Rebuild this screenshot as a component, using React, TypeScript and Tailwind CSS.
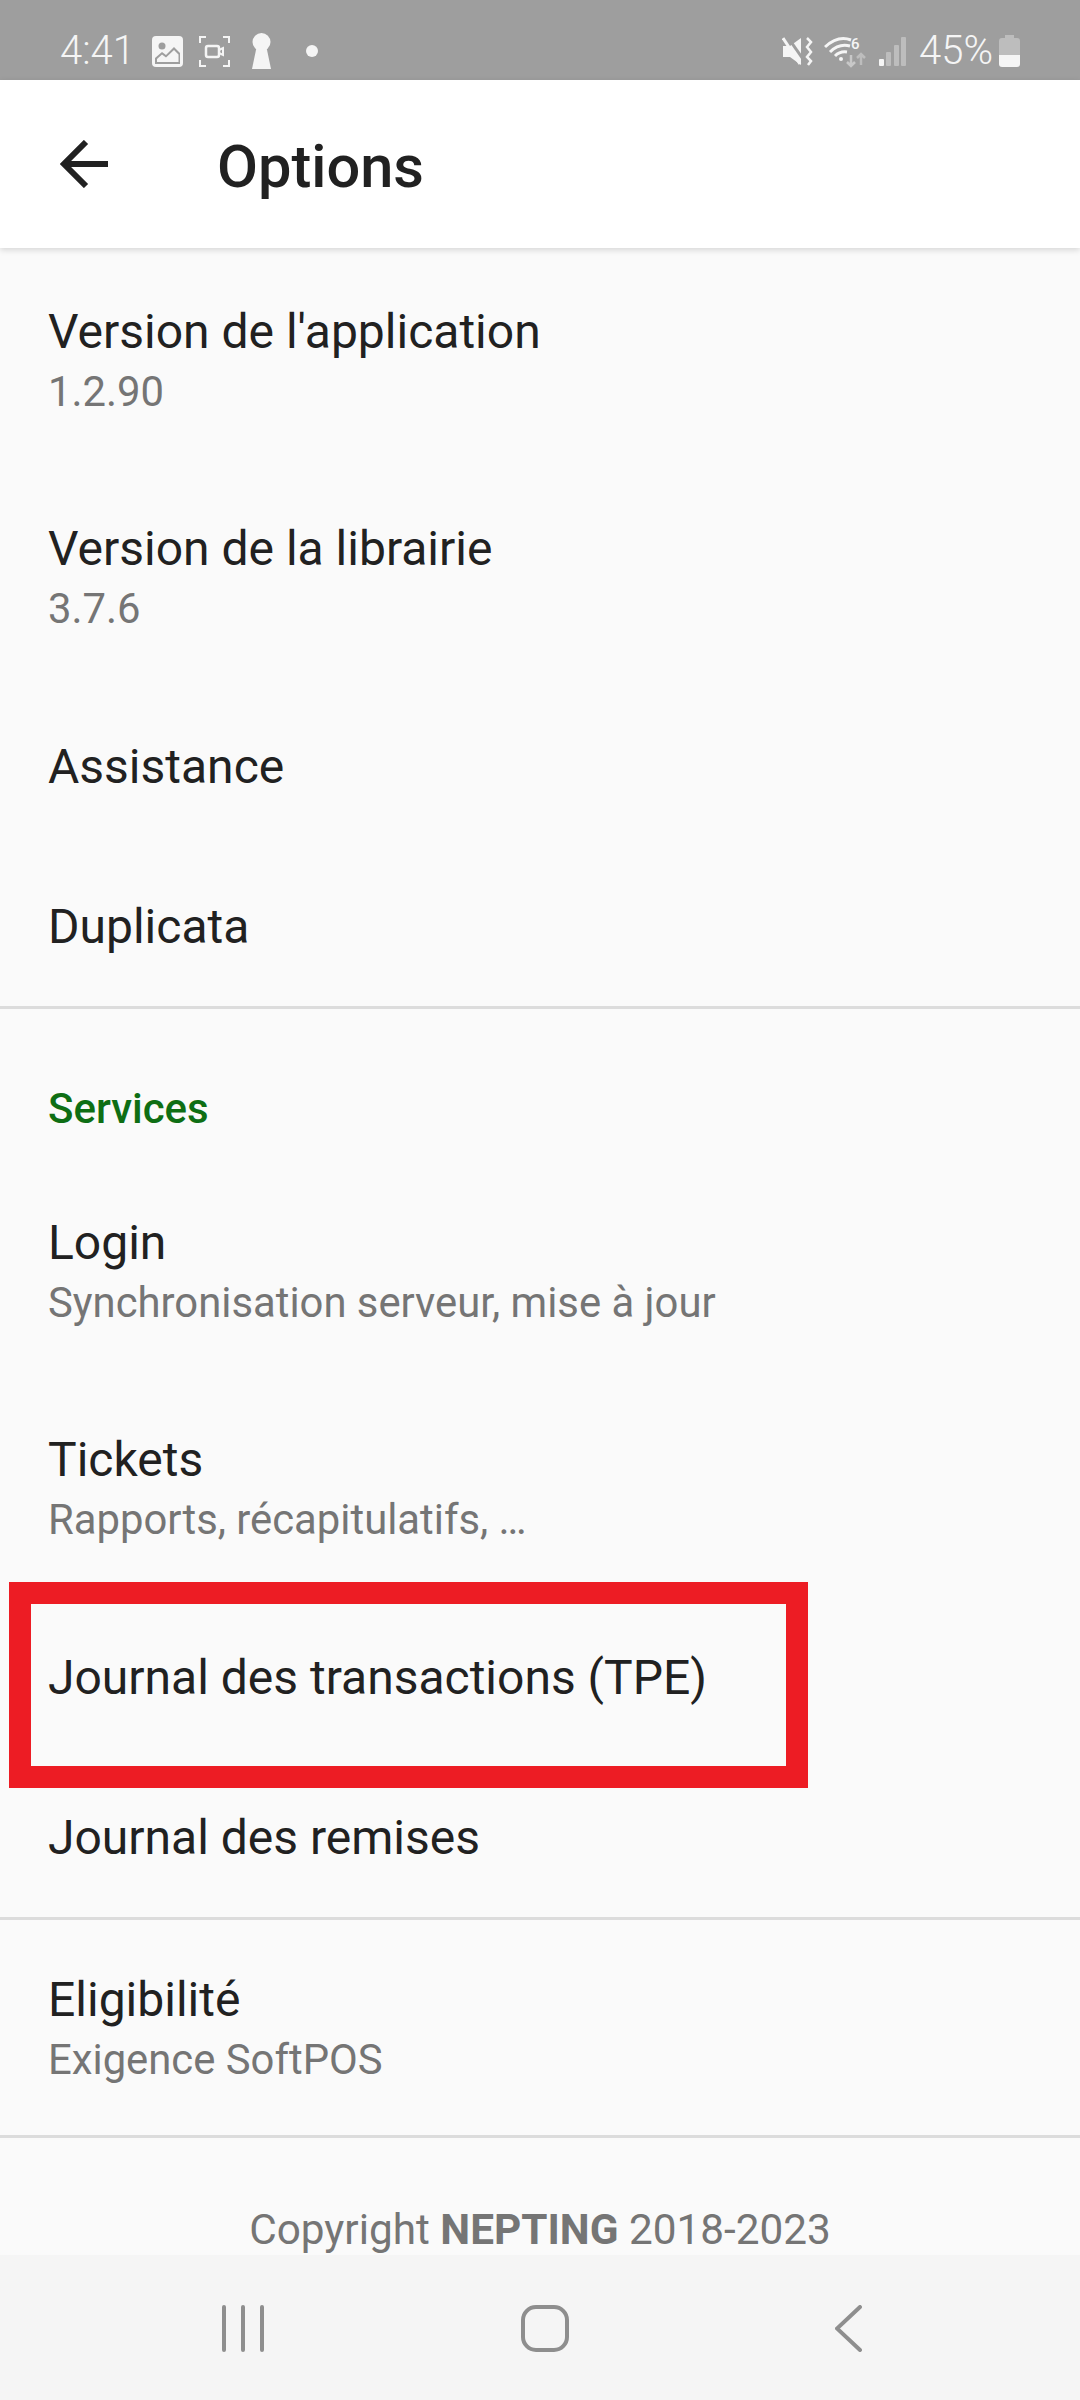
const font = { fontFamily: "Roboto, sans-serif" };

function StatusBar() {
  return (
    <div className="h-20 bg-[#9e9e9e] flex items-center pl-[60px] pr-[60px] pt-[22px] text-[#f5f5f5] shrink-0">
      <span className="text-[40px] leading-none font-light w-[92px]">4:41</span>
      {/* gallery */}
      <svg width="31" height="31" viewBox="0 0 31 31" className="mr-4">
        <rect width="31" height="31" rx="4" fill="#f5f5f5" />
        <circle cx="10" cy="10" r="3.5" fill="#9e9e9e" />
        <path d="M3 28v-6l7-6 4 3 8-8 6 6v11z" fill="#9e9e9e" />
        <path d="M5 26v-3l5-4.500 4 3 8-7.500 4.500 4.500v7.500z" fill="#f5f5f5" />
      </svg>
      {/* screen recorder */}
      <svg width="31" height="31" viewBox="0 0 31 31" fill="none" stroke="#f5f5f5" strokeWidth="2" className="mr-[22px]">
        <path d="M7 1H1v6M24 1h6v6M7 30H1v-6M24 30h6v-6" />
        <rect x="7" y="10" width="13" height="11" rx="2" strokeWidth="2.500" />
        <path d="M20 14l4-2v7l-4-2" />
      </svg>
      {/* keyhole */}
      <svg width="19" height="36" viewBox="0 0 19 36" className="mr-[35px]">
        <circle cx="9.500" cy="9" r="9" fill="#f5f5f5" />
        <path d="M5 12h9l5 24H0z" fill="#f5f5f5" />
      </svg>
      <span className="w-3 h-3 rounded-full bg-[#f5f5f5]" />

      <div className="ml-auto flex items-center">
        {/* mute / vibrate */}
        <svg width="31" height="29" viewBox="0 0 31 29" className="mr-[11px]">
          <path d="M1 9h7l11-8v27L8 20H1z" fill="#f5f5f5" />
          <path d="M5 -1l18 26" stroke="#9e9e9e" strokeWidth="3" />
          <path d="M1 1l17 26" stroke="#f5f5f5" strokeWidth="3" />
          <path d="M25 1l4 4-4 5 4 5-4 5 4 4-3 4" fill="none" stroke="#f5f5f5" strokeWidth="2.500" />
        </svg>
        {/* wifi 6 */}
        <svg width="42" height="33" viewBox="0 0 42 33" fill="none" className="mr-[13px]">
          <path d="M1 12Q14 0 27 5" stroke="#f5f5f5" strokeWidth="3" />
          <path d="M6 17Q15 8 26 11" stroke="#f5f5f5" strokeWidth="3" />
          <path d="M11 21Q16 16 23 17" stroke="#f5f5f5" strokeWidth="3" />
          <circle cx="17" cy="24" r="2" fill="#f5f5f5" />
          <text x="27" y="14" fontSize="15" fontFamily="Roboto, sans-serif" fontWeight="500" fill="#f5f5f5">6</text>
          <path d="M27 20v11M23 27l4 4 4-4" stroke="#c8c8c8" strokeWidth="2.500" />
          <path d="M37 30V19M33 23l4-4 4 4" stroke="#bdbdbd" strokeWidth="2.500" />
        </svg>
        {/* signal */}
        <svg width="27" height="29" viewBox="0 0 27 29" className="mr-[13px]">
          <rect x="0" y="22" width="5" height="7" rx="1" fill="#f5f5f5" />
          <rect x="7" y="15" width="5" height="14" rx="1" fill="#bdbdbd" />
          <rect x="15" y="8" width="5" height="21" rx="1" fill="#bdbdbd" />
          <rect x="22" y="0" width="5" height="29" rx="1" fill="#bdbdbd" />
        </svg>
        <span className="text-[40px] leading-none font-light mr-[6px]">45%</span>
        {/* battery */}
        <svg width="21" height="32" viewBox="0 0 21 32">
          <path d="M6 0h9v3h3a3 3 0 0 1 3 3v14H0V6a3 3 0 0 1 3-3h3z" fill="#bdbdbd" />
          <path d="M0 20h21v9a3 3 0 0 1-3 3H3a3 3 0 0 1-3-3z" fill="#f5f5f5" />
        </svg>
      </div>
    </div>
  );
}

function Row({ title, sub }: { title: string; sub?: string }) {
  return (
    <div className={`${sub ? "h-[217px]" : "h-[160px]"} px-12 pt-0.5 flex flex-col justify-center`}>
      <div className="text-[48px] leading-[60px] text-[#212121]">{title}</div>
      {sub && <div className="text-[41.800px] leading-[60px] text-[#757575]">{sub}</div>}
    </div>
  );
}

export default function App() {
  return (
    <div className="w-[1080px] h-[2400px] bg-[#fafafa] flex flex-col overflow-hidden" style={font}>
      <StatusBar />
      <header className="h-[168px] bg-white flex items-center pl-[60px] shrink-0 shadow-[0_2px_6px_rgba(0,0,0,0.15)] z-10">
        <svg width="48" height="48" viewBox="0 0 48 48" fill="none" stroke="#212121" strokeWidth="6" className="mr-[109px]">
          <path d="M48 24H4M26 2L4 24l22 22" />
        </svg>
        <h1 className="text-[59.500px] font-medium text-[#212121] leading-none pt-2">Options</h1>
      </header>

      <main className="flex-1 overflow-hidden pt-1">
        <Row title="Version de l'application" sub="1.2.90" />
        <Row title="Version de la librairie" sub="3.7.6" />
        <Row title="Assistance" />
        <Row title="Duplicata" />
        <div className="h-[3px] bg-[#dcdcdc]" />

        <div className="h-[154px] pt-[71px] px-12 text-[42px] leading-[58px] font-medium text-[#0e6e14]">Services</div>
        <Row title="Login" sub="Synchronisation serveur, mise à jour" />
        <Row title="Tickets" sub="Rapports, récapitulatifs, …" />
        <div className="relative">
          <Row title="Journal des transactions (TPE)" />
          <div className="absolute left-[9px] top-[-15px] w-[799px] h-[206px] border-[22px] border-[#ed1c24]" />
        </div>
        <Row title="Journal des remises" />
        <div className="h-[3px] bg-[#dcdcdc]" />
        <div className="-mb-0.5">
          <Row title="Eligibilité" sub="Exigence SoftPOS" />
        </div>
        <div className="h-[3px] bg-[#dcdcdc]" />
        <div className="pt-[63px] text-center text-[42.300px] leading-[58px] text-[#757575]">
          Copyright <span className="font-bold">NEPTING</span> 2018-2023
        </div>
      </main>

      <nav className="h-[145px] bg-[#f5f5f5] shrink-0 relative flex items-start pt-[50px]">
        <svg width="42" height="47" viewBox="0 0 42 47" fill="none" stroke="#8e8e8e" strokeWidth="4" strokeLinecap="round" className="ml-[222px]">
          <path d="M2 2v43M21 2v43M40 2v43" />
        </svg>
        <svg width="48" height="47" viewBox="0 0 48 47" fill="none" stroke="#8e8e8e" strokeWidth="4" className="ml-[257px]">
          <rect x="2" y="2" width="44" height="43" rx="13" />
        </svg>
        <svg width="27" height="47" viewBox="0 0 27 47" fill="none" stroke="#8e8e8e" strokeWidth="4" strokeLinecap="round" className="ml-[266px]">
          <path d="M25 2L2 23.500 25 45" />
        </svg>
      </nav>
    </div>
  );
}
